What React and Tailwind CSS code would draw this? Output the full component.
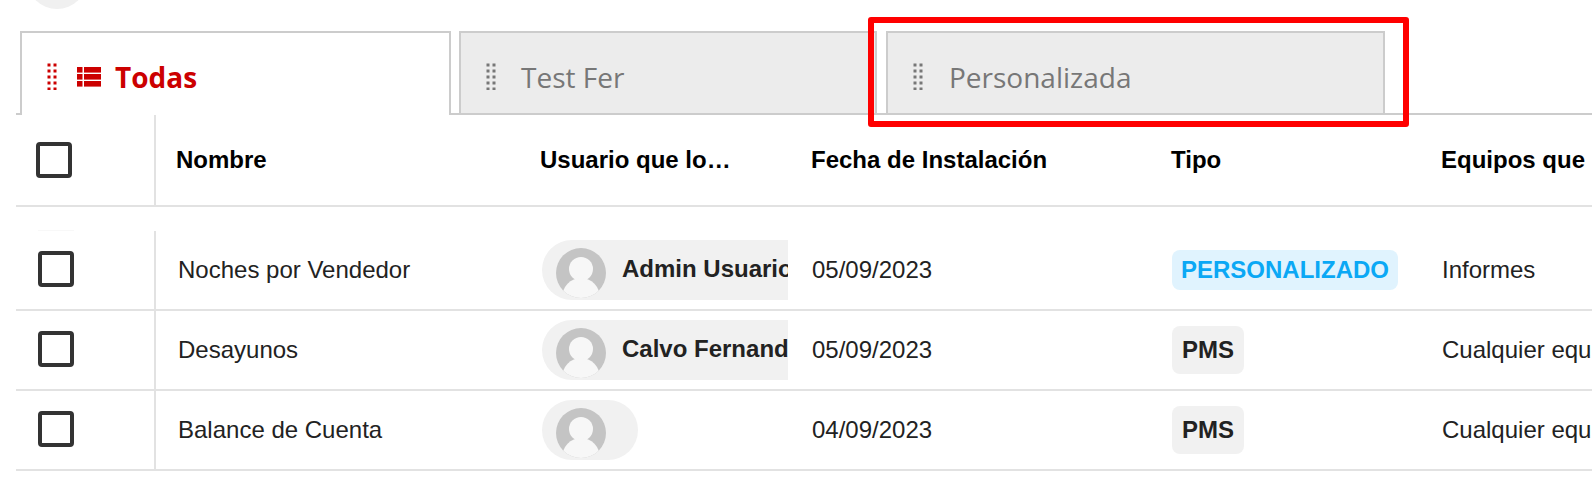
const COLS = "grid grid-cols-[140px_384px_271px_360px_270px_1fr]";

const rows = [
  { name: "Noches por Vendedor", user: "Admin Usuario", date: "05/09/2023", tipo: "PERSONALIZADO", team: "Informes" },
  { name: "Desayunos", user: "Calvo Fernando", date: "05/09/2023", tipo: "PMS", team: "Cualquier equipo" },
  { name: "Balance de Cuenta", user: "", date: "04/09/2023", tipo: "PMS", team: "Cualquier equipo" },
];

function Grip({ className }) {
  const ys = [0, 6, 12, 18, 24];
  return (
    <svg width="10" height="27" viewBox="0 0 10 27" className={className} fill="currentColor">
      {ys.map((y) => (
        <g key={y}>
          <rect x="0.5" y={y + 0.5} width="3" height="3" />
          <rect x="6.5" y={y + 0.5} width="3" height="3" />
        </g>
      ))}
    </svg>
  );
}

function ListIcon() {
  return (
    <svg width="24" height="20" viewBox="0 0 24 20" fill="currentColor" className="shrink-0">
      {[0, 7, 14].map((y) => (
        <g key={y}>
          <rect x="0" y={y} width="5.5" height="5.6" />
          <rect x="7" y={y} width="17" height="5.6" />
        </g>
      ))}
    </svg>
  );
}

function Avatar() {
  return (
    <svg width="50" height="50" viewBox="0 0 50 50" className="shrink-0">
      <clipPath id="avatar-clip">
        <circle cx="25" cy="25" r="25" />
      </clipPath>
      <circle cx="25" cy="25" r="25" fill="#c4c4c4" />
      <g clipPath="url(#avatar-clip)" fill="#f7f7f7">
        <circle cx="25" cy="21" r="12" />
        <ellipse cx="25" cy="50" rx="19" ry="20" />
      </g>
    </svg>
  );
}

function Checkbox({ className = "" }) {
  return <div className={`w-9 h-9 border-[4px] border-[#333] rounded-[4px] ${className}`} />;
}

export default function App() {
  return (
    <div className="relative h-[480px] w-[1592px] overflow-hidden bg-white font-['Liberation_Sans',sans-serif]">
      {/* trozo del avatar de arriba */}
      <div className="absolute left-[27px] top-[-51px] w-[60px] h-[60px] rounded-full bg-[#f0f0f0]" />

      {/* Tabs */}
      <div className="pt-[31px] ml-4 border-b-2 border-[#ccc] flex font-['Open_Sans',sans-serif] text-[28px] h-[115px]">
        <div className="ml-1 w-[431px] h-[84px] bg-white border-2 border-b-0 border-[#ccc] flex items-center pl-[25px] pt-[5px] gap-[20px] text-[#cc0000] font-bold">
          <Grip />
          <div className="flex items-center gap-[14px]">
            <ListIcon />
            <span className="pt-[1px]">Todas</span>
          </div>
        </div>
        <div className="ml-2 w-[418px] h-[84px] bg-[#ececec] border-2 border-[#ccc] flex items-center pl-[25px] pt-[7px] gap-[25px] text-[#777]">
          <Grip />
          <span className="pt-[1px]">Test Fer</span>
        </div>
        <div className="ml-[9px] w-[499px] h-[84px] bg-[#ececec] border-2 border-[#ccc] flex items-center pl-[25px] pt-[7px] gap-[26px] text-[#777]">
          <Grip />
          <span className="pt-[1px]">Personalizada</span>
        </div>
      </div>

      {/* Marca roja */}
      <div className="absolute left-[868px] top-[17px] w-[541px] h-[110px] border-[6px] border-[#ff0000] rounded-[3px]" />

      {/* Cabecera */}
      <div className={`${COLS} ml-4 h-[92px] border-b-2 border-[#e2e2e2] text-[24px] font-bold text-black`}>
        <div className="border-r-2 border-[#e2e2e2] flex items-center pl-5">
          <Checkbox />
        </div>
        <div className="flex items-center pl-[20px]">Nombre</div>
        <div className="flex items-center">Usuario que lo…</div>
        <div className="flex items-center">Fecha de Instalación</div>
        <div className="flex items-center">Tipo</div>
        <div className="flex items-center whitespace-nowrap overflow-hidden">Equipos que</div>
      </div>

      {/* Separador */}
      <div className="ml-4 h-[24px] flex items-end pl-[22px]">
        <div className="w-9 h-px bg-[#f8f8f8]" />
      </div>

      {/* Filas */}
      {rows.map((r) => (
        <div key={r.name} className={`${COLS} ml-4 h-[80px] border-b-2 border-[#e2e2e2] text-[24px] text-[#222]`}>
          <div className="border-r-2 border-[#e2e2e2] flex items-center pl-[22px] pb-[2px]">
            <Checkbox />
          </div>
          <div className="flex items-center pl-[22px]">{r.name}</div>
          <div className="flex items-center pl-[2px]">
            <div className="w-[246px] overflow-hidden">
              <div className={`h-[60px] rounded-[30px] bg-[#f1f1f1] pl-[14px] flex items-end pb-[2px] ${r.user ? "w-[300px]" : "w-[96px]"}`}>
                <Avatar />
                {r.user && <span className="ml-[16px] self-center font-bold whitespace-nowrap">{r.user}</span>}
              </div>
            </div>
          </div>
          <div className="flex items-center pl-px">{r.date}</div>
          <div className="flex items-center pl-[1px]">
            {r.tipo === "PMS" ? (
              <span className="h-12 w-[72px] flex items-center justify-center rounded-lg bg-[#f1f1f1] font-bold">PMS</span>
            ) : (
              <span className="h-10 w-[226px] flex items-center justify-center rounded-lg bg-[#e0f3fe] font-bold text-[#0ba8f5]">{r.tipo}</span>
            )}
          </div>
          <div className="flex items-center pl-[1px] whitespace-nowrap overflow-hidden">{r.team}</div>
        </div>
      ))}
    </div>
  );
}
